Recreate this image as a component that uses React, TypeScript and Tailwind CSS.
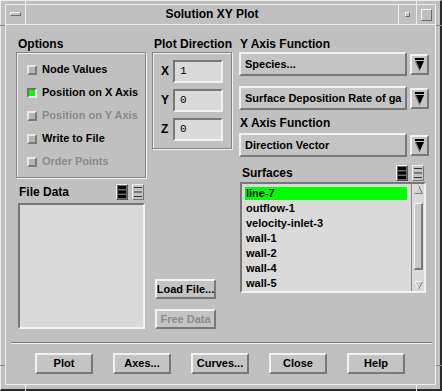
import React from 'react';

const font = "font-['Liberation_Sans',Arial,sans-serif]";
const raised = 'border-2 border-t-[#f2f2f2] border-l-[#f2f2f2] border-b-[#787878] border-r-[#787878]';
const sunken = 'border-2 border-t-[#787878] border-l-[#787878] border-b-[#f2f2f2] border-r-[#f2f2f2]';
const etched = 'border border-[#858585] shadow-[inset_1px_1px_0_#f2f2f2,1px_1px_0_#f2f2f2]';

function Check({ label, checked, disabled }: { label: string; checked?: boolean; disabled?: boolean }) {
    return (
        <div className="h-[23px] flex items-center gap-[5px]">
            <div
                className={
                    checked
                        ? 'w-[10px] h-[10px] border-2 border-t-[#6e6e6e] border-l-[#6e6e6e] border-b-[#e8e8e8] border-r-[#e8e8e8] bg-[#00ff00]'
                        : 'w-[10px] h-[10px] border-2 border-t-[#e8e8e8] border-l-[#e8e8e8] border-b-[#7a7a7a] border-r-[#7a7a7a] bg-[#b4b4b4]'
                }
            />
            <span className={disabled ? 'text-[#8a8a8a]' : 'text-black'}>{label}</span>
        </div>
    );
}

function DirInput({ axis, value }: { axis: string; value: string }) {
    return (
        <div className="flex items-center h-[23px]">
            <span className="w-[12px] text-[12px]">{axis}</span>
            <div className={`w-[50px] h-[23px] ${sunken} bg-[#dadada] flex items-center pl-[5px] font-['Liberation_Mono',monospace] font-normal text-[11px]`}>
                {value}
            </div>
        </div>
    );
}

function Arrow() {
    return (
        <div className={`w-[19px] h-[21px] ${raised} bg-[#c4c4c4] flex items-center justify-center`}>
            <svg width="9" height="13" viewBox="0 0 9 13">
                <rect x="0" y="0" width="9" height="2" fill="#000" />
                <polygon points="0,3 9,3 4.5,13" fill="#000" />
                <line x1="0.5" y1="3" x2="4.5" y2="12" stroke="#8a8a8a" strokeWidth="1" />
            </svg>
        </div>
    );
}

function Dropdown({ text }: { text: string }) {
    return (
        <div className="flex items-center gap-[3px]">
            <div className={`w-[168px] h-[24px] ${raised} bg-[#c4c4c4] flex items-center pl-[4px] whitespace-nowrap overflow-hidden`}>
                {text}
            </div>
            <Arrow />
        </div>
    );
}

function ListIcons() {
    return (
        <div className="flex gap-[4px]">
            <div className="w-[12px] h-[16px] border border-t-[#f2f2f2] border-l-[#f2f2f2] border-b-[#555] border-r-[#555] bg-[#6a6a6a] flex items-center justify-center">
                <svg width="8" height="12" viewBox="0 0 8 12">
                    <rect x="0" y="0" width="8" height="3" fill="#000" />
                    <rect x="0" y="4.5" width="8" height="3" fill="#000" />
                    <rect x="0" y="9" width="8" height="3" fill="#000" />
                </svg>
            </div>
            <div className="w-[12px] h-[16px] border border-t-[#f2f2f2] border-l-[#f2f2f2] border-b-[#787878] border-r-[#787878] bg-[#c4c4c4] flex items-center justify-center">
                <svg width="8" height="12" viewBox="0 0 8 12">
                    <rect x="0" y="1" width="8" height="1" fill="#333" />
                    <rect x="0" y="5.5" width="8" height="1" fill="#333" />
                    <rect x="0" y="10" width="8" height="1" fill="#333" />
                </svg>
            </div>
        </div>
    );
}

function BigButton({ label }: { label: string }) {
    return (
        <div className={`w-[58px] h-[21px] ${raised} bg-[#c4c4c4] flex items-center justify-center`}>{label}</div>
    );
}

const surfaces = ['line-7', 'outflow-1', 'velocity-inlet-3', 'wall-1', 'wall-2', 'wall-4', 'wall-5'];

export default function App() {
    return (
        <div className={`${font} font-bold text-[11px] leading-[13px] text-black relative w-[442px] h-[391px] bg-[#c0c0c0] border-l border-t border-l-[#eeeeee] border-t-[#eeeeee] border-r-2 border-b-2 border-r-[#2a2a2a] border-b-[#2a2a2a] pl-[4px] pt-[3px] pr-[4px] pb-[4px]`}>
            {/* resize handle ticks */}
            <div className="absolute left-[24px] top-[-1px] w-px h-[4px] bg-[#eeeeee]" />
            <div className="absolute left-[415px] top-[-1px] w-px h-[4px] bg-[#eeeeee]" />
            <div className="absolute left-[24px] bottom-[-2px] w-px h-[6px] bg-[#eeeeee]" />
            <div className="absolute left-[415px] bottom-[-2px] w-px h-[6px] bg-[#eeeeee]" />
            <div className="absolute left-[-1px] top-[24px] w-[5px] h-px bg-[#8a8a8a]" />
            <div className="absolute left-[-1px] top-[364px] w-[5px] h-px bg-[#8a8a8a]" />
            <div className="absolute right-[-2px] top-[24px] w-[6px] h-px bg-[#8a8a8a]" />
            <div className="absolute right-[-2px] top-[364px] w-[6px] h-px bg-[#8a8a8a]" />

            <div className="w-full h-full border border-[#eeeeee] flex flex-col">
                {/* title bar */}
                <div className="h-[20px] flex border-b border-b-[#eeeeee]">
                    <div className="w-[20px] border-r border-r-[#eeeeee] flex items-start pt-[7px] pl-[4px]">
                        <div className="w-[11px] h-[4px] border border-t-[#f4f4f4] border-l-[#f4f4f4] border-b-[#6a6a6a] border-r-[#6a6a6a]" />
                    </div>
                    <div className="flex-1 flex items-center justify-center text-[12px]">Solution XY Plot</div>
                    <div className="w-[18px] border-l border-l-[#eeeeee] flex items-center justify-center">
                        <div className="w-[5px] h-[5px] border border-t-[#f4f4f4] border-l-[#f4f4f4] border-b-[#6a6a6a] border-r-[#6a6a6a]" />
                    </div>
                    <div className="w-[19px] border-l border-l-[#eeeeee] flex items-center justify-center">
                        <div className="w-[11px] h-[12px] border border-t-[#f4f4f4] border-l-[#f4f4f4] border-b-[#6a6a6a] border-r-[#6a6a6a]" />
                    </div>
                </div>

                {/* client */}
                <div className="flex-1 flex flex-col">
                    <div className="flex pl-[10px] pt-[11px] gap-[6px]">
                        {/* column 1 */}
                        <div className="w-[130px] flex flex-col">
                            <div className="h-[16px] flex items-center pl-[2px] text-[12px]">Options</div>
                            <div className={`h-[126px] ${etched} pl-[10px] pt-[5px] flex flex-col`}>
                                <Check label="Node Values" />
                                <Check label="Position on X Axis" checked />
                                <Check label="Position on Y Axis" disabled />
                                <Check label="Write to File" />
                                <Check label="Order Points" disabled />
                            </div>
                            <div className="mt-[5px] h-[18px] flex items-center justify-between pl-[3px] pr-[2px]">
                                <span className="text-[12px]">File Data</span>
                                <ListIcons />
                            </div>
                            <div className={`mt-[2px] ml-[2px] w-[127px] h-[126px] ${sunken} bg-[#dadada]`} />
                        </div>

                        {/* column 2 */}
                        <div className="w-[80px] flex flex-col">
                            <div className="h-[16px] flex items-center pl-[2px] text-[12px] whitespace-nowrap">Plot Direction</div>
                            <div className={`h-[97px] ${etched} pl-[8px] pt-[7px] flex flex-col gap-[6px]`}>
                                <DirInput axis="X" value="1" />
                                <DirInput axis="Y" value="0" />
                                <DirInput axis="Z" value="0" />
                            </div>
                            <div className="mt-auto ml-[3px] flex flex-col gap-[10px]">
                                <div className={`w-[61px] h-[20px] ${raised} bg-[#c4c4c4] flex items-center justify-center whitespace-nowrap`}>Load File...</div>
                                <div className={`w-[61px] h-[20px] ${raised} bg-[#c4c4c4] flex items-center justify-center whitespace-nowrap text-[#8a8a8a]`}>Free Data</div>
                            </div>
                        </div>

                        {/* column 3 */}
                        <div className="w-[190px] ml-px flex flex-col">
                            <div className="h-[16px] flex items-center pl-[1px] text-[12px]">Y Axis Function</div>
                            <Dropdown text="Species..." />
                            <div className="mt-[10px]">
                                <Dropdown text="Surface Deposition Rate of ga" />
                            </div>
                            <div className="h-[23px] pt-[7px] pl-[1px] text-[12px]">X Axis Function</div>
                            <Dropdown text="Direction Vector" />
                            <div className="mt-[8px] h-[16px] flex items-center justify-between pl-[3px] pr-[5px]">
                                <span className="text-[12px]">Surfaces</span>
                                <ListIcons />
                            </div>
                            <div className={`mt-px ml-px w-[186px] h-[111px] ${sunken} bg-[#dadada] flex`}>
                                <div className="flex-1 pt-[2px] pl-[3px] pr-[4px] flex flex-col">
                                    {surfaces.map((s, i) => (
                                        <div key={s} className="h-[15px] flex items-center">
                                            <div className={`w-full h-[13px] flex items-center pl-px ${i === 0 ? 'bg-[#00ff00]' : ''}`}>{s}</div>
                                        </div>
                                    ))}
                                </div>
                                <div className="w-[13px] border-l border-l-[#8a8a8a] flex flex-col items-center pt-[1px] pb-[1px]">
                                    <svg width="9" height="9" viewBox="0 0 9 9">
                                        <polygon points="4.5,0.5 8.5,8.5 0.5,8.5" fill="#cfcfcf" stroke="#7a7a7a" strokeWidth="1" />
                                        <line x1="4.5" y1="0.5" x2="0.5" y2="8.5" stroke="#f4f4f4" strokeWidth="1" />
                                    </svg>
                                    <div className="mt-[9px] w-[9px] h-[67px] border-l border-t border-l-[#f4f4f4] border-t-[#f4f4f4] border-r-2 border-b-2 border-r-[#7a7a7a] border-b-[#7a7a7a] bg-[#c8c8c8]" />
                                    <div className="flex-1" />
                                    <svg width="9" height="9" viewBox="0 0 9 9">
                                        <polygon points="0.5,0.5 8.5,0.5 4.5,8.5" fill="#cfcfcf" stroke="#f4f4f4" strokeWidth="1" />
                                        <line x1="8.5" y1="0.5" x2="4.5" y2="8.5" stroke="#7a7a7a" strokeWidth="1" />
                                    </svg>
                                </div>
                            </div>
                        </div>
                    </div>

                    <div className="mt-[13px] ml-[5px] mr-[3px] h-[2px] border-t border-t-[#7a7a7a] border-b border-b-[#f2f2f2]" />

                    <div className="mt-[9px] flex justify-center gap-[20px] pr-[1px]">
                        <BigButton label="Plot" />
                        <BigButton label="Axes..." />
                        <BigButton label="Curves..." />
                        <BigButton label="Close" />
                        <BigButton label="Help" />
                    </div>
                </div>
            </div>
        </div>
    );
}
